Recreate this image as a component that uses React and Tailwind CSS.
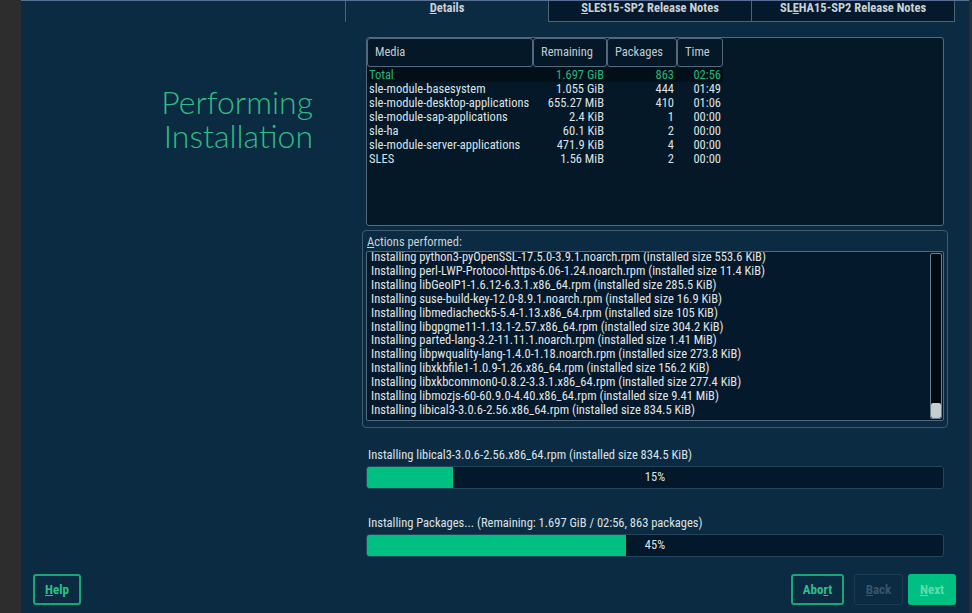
import React from "react";

const media = [
  ["sle-module-basesystem", "1.055 GiB", "444", "01:49"],
  ["sle-module-desktop-applications", "655.27 MiB", "410", "01:06"],
  ["sle-module-sap-applications", "2.4 KiB", "1", "00:00"],
  ["sle-ha", "60.1 KiB", "2", "00:00"],
  ["sle-module-server-applications", "471.9 KiB", "4", "00:00"],
  ["SLES", "1.56 MiB", "2", "00:00"],
];

const log = [
  "Installing python3-pyOpenSSL-17.5.0-3.9.1.noarch.rpm (installed size 553.6 KiB)",
  "Installing perl-LWP-Protocol-https-6.06-1.24.noarch.rpm (installed size 11.4 KiB)",
  "Installing libGeoIP1-1.6.12-6.3.1.x86_64.rpm (installed size 285.5 KiB)",
  "Installing suse-build-key-12.0-8.9.1.noarch.rpm (installed size 16.9 KiB)",
  "Installing libmediacheck5-5.4-1.13.x86_64.rpm (installed size 105 KiB)",
  "Installing libgpgme11-1.13.1-2.57.x86_64.rpm (installed size 304.2 KiB)",
  "Installing parted-lang-3.2-11.11.1.noarch.rpm (installed size 1.41 MiB)",
  "Installing libpwquality-lang-1.4.0-1.18.noarch.rpm (installed size 273.8 KiB)",
  "Installing libxkbfile1-1.0.9-1.26.x86_64.rpm (installed size 156.2 KiB)",
  "Installing libxkbcommon0-0.8.2-3.3.1.x86_64.rpm (installed size 277.4 KiB)",
  "Installing libmozjs-60-60.9.0-4.40.x86_64.rpm (installed size 9.41 MiB)",
  "Installing libical3-3.0.6-2.56.x86_64.rpm (installed size 834.5 KiB)",
];

function ProgressBar({ percent }) {
  return (
    <div className="relative h-[23px] rounded-[3px] border border-[#24455b] bg-[#03182a] overflow-hidden">
      <div
        className="absolute left-0 top-0 bottom-0 bg-[#00c081]"
        style={{ width: `${percent}%` }}
      />
      <div className="relative flex h-full items-center justify-center text-[12.5px] text-[#dfe4e8]">
        {percent}%
      </div>
    </div>
  );
}

export default function App() {
  return (
    <div className="flex h-[613px] w-[972px] overflow-hidden bg-[#2d2d2d] font-['Roboto',sans-serif] font-stretch-[81%]">
      <div className="w-[21px] shrink-0" />

      <div className="flex flex-1 flex-col border-t border-[#5a6f96] bg-[#0b2b42]">
        <div className="flex flex-1">
          {/* Title column */}
          <div className="w-[324px] shrink-0 pr-[32px] pt-[84px] text-right font-['Lato',sans-serif] font-stretch-normal text-[32px] font-light leading-[34px] text-[#2fbd84]">
            <div className="h-[34px]">Performing</div>
            <div className="h-[34px]">Installation</div>
          </div>

          {/* Right panel */}
          <div className="flex flex-1 flex-col">
            {/* Tabs */}
            <div className="flex h-[21px] text-[12.5px] font-bold leading-[14px] text-[#c9d1d8]">
              <div className="flex w-[203px] items-start justify-center border-l border-[#4d6478]">
                <span>
                  <span className="underline">D</span>etails
                </span>
              </div>
              <div className="flex w-[204px] items-start justify-center border border-t-0 border-[#4d6478] bg-[#04192b]">
                <span>
                  <span className="underline">S</span>LES15-SP2 Release Notes
                </span>
              </div>
              <div className="flex w-[203px] items-start justify-center border border-t-0 border-l-0 border-[#4d6478] bg-[#04192b]">
                <span>
                  SL<span className="underline">E</span>HA15-SP2 Release Notes
                </span>
              </div>
            </div>

            {/* Media table */}
            <div className="ml-[21px] mt-[15px] h-[189px] w-[578px] rounded-[3px] border border-[#52697d] bg-[#041828] text-[12.5px]">
              <div className="grid h-[29px] grid-cols-[166px_74px_70px_46px] text-[#c3cbd2]">
                {["Media", "Remaining", "Packages", "Time"].map((h) => (
                  <div
                    key={h}
                    className="flex items-center rounded-[3px] border border-[#52697d] pl-[7px]"
                  >
                    {h}
                  </div>
                ))}
              </div>
              <div className="mt-[1px] grid w-[356px] grid-cols-[166px_74px_70px_46px] bg-[#020e18] leading-[14px] text-[#1fb97d]">
                <div className="pl-[2px]">Total</div>
                <div className="pr-[3px] text-right">1.697 GiB</div>
                <div className="pr-[3px] text-right">863</div>
                <div className="pr-[2px] text-right">02:56</div>
              </div>
              {media.map((r) => (
                <div
                  key={r[0]}
                  className="grid w-[356px] grid-cols-[166px_74px_70px_46px] leading-[14px] text-[#dde2e6]"
                >
                  <div className="whitespace-nowrap pl-[2px]">{r[0]}</div>
                  <div className="pr-[3px] text-right">{r[1]}</div>
                  <div className="pr-[3px] text-right">{r[2]}</div>
                  <div className="pr-[2px] text-right">{r[3]}</div>
                </div>
              ))}
            </div>

            {/* Actions performed */}
            <div className="ml-[17px] mt-[4px] h-[198px] w-[586px] rounded-[4px] border border-[#3f5a6e] px-[3px] pt-[2px]">
              <div className="h-[18px] pl-[1px] text-[12.5px] leading-[18px] text-[#c9d1d8]">
                <span className="underline">A</span>ctions performed:
              </div>
              <div className="flex h-[170px] rounded-[2px] border border-[#52697d] bg-[#041a2c]">
                <div className="flex-1 overflow-hidden pl-[4px] text-[12.5px] leading-[13.9px] text-[#e1e5e8]">
                  <div className="-mt-[2px]">
                    {log.map((l) => (
                      <div key={l} className="whitespace-nowrap">
                        {l}
                      </div>
                    ))}
                  </div>
                </div>
                <div className="m-[1px] flex w-[12px] flex-col justify-end rounded-[2px] border border-[#6b7f8d] bg-[#010a11]">
                  <div className="h-[15px] rounded-[2px] bg-[#c5cfd0]" />
                </div>
              </div>
            </div>

            {/* Progress */}
            <div className="ml-[21px] mt-[19px] w-[578px]">
              <div className="mb-[3px] pl-[2px] text-[12.5px] leading-[16px] text-[#dde2e6]">
                Installing libical3-3.0.6-2.56.x86_64.rpm (installed size 834.5 KiB)
              </div>
              <ProgressBar percent={15} />
              <div className="mb-[3px] mt-[26px] pl-[2px] text-[12.5px] leading-[16px] text-[#dde2e6]">
                Installing Packages... (Remaining: 1.697 GiB / 02:56, 863 packages)
              </div>
              <ProgressBar percent={45} />
            </div>
          </div>
        </div>

        {/* Footer buttons */}
        <div className="flex h-[39px] items-start pl-[12px] pr-[13px] text-[13px] font-bold">
          <button className="h-[31px] w-[48px] rounded-[3px] border-2 border-[#17a676] text-[#2cc08a]">
            <span className="underline">H</span>elp
          </button>
          <div className="flex-1" />
          <button className="h-[31px] w-[53px] rounded-[3px] border-2 border-[#17a676] text-[#2cc08a]">
            Abo<span className="underline">r</span>t
          </button>
          <button className="ml-[10px] h-[31px] w-[49px] rounded-[3px] border border-[#1c3a50] text-[#385468]">
            <span className="underline">B</span>ack
          </button>
          <button className="ml-[5px] h-[31px] w-[48px] rounded-[3px] bg-[#00c081] text-[#5fdcae]">
            <span className="underline">N</span>ext
          </button>
        </div>
      </div>

      <div className="w-[3px] shrink-0" />
    </div>
  );
}
